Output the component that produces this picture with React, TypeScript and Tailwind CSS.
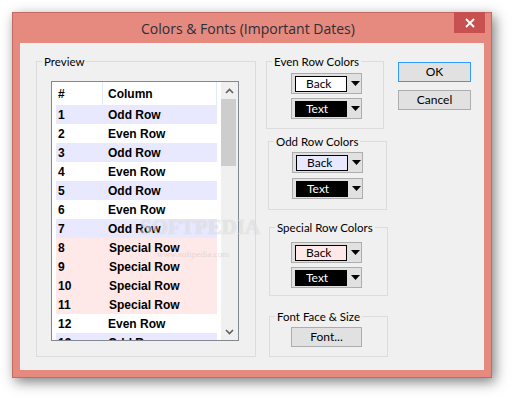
import React from 'react'

const rows: { n: number; label: string; kind: 'odd' | 'even' | 'special' }[] = [
    { n: 1, label: 'Odd Row', kind: 'odd' },
    { n: 2, label: 'Even Row', kind: 'even' },
    { n: 3, label: 'Odd Row', kind: 'odd' },
    { n: 4, label: 'Even Row', kind: 'even' },
    { n: 5, label: 'Odd Row', kind: 'odd' },
    { n: 6, label: 'Even Row', kind: 'even' },
    { n: 7, label: 'Odd Row', kind: 'odd' },
    { n: 8, label: 'Special Row', kind: 'special' },
    { n: 9, label: 'Special Row', kind: 'special' },
    { n: 10, label: 'Special Row', kind: 'special' },
    { n: 11, label: 'Special Row', kind: 'special' },
    { n: 12, label: 'Even Row', kind: 'even' },
    { n: 13, label: 'Odd Row', kind: 'odd' },
]

const rowBg = {
    odd: 'bg-[#e8e8ff]',
    even: 'bg-white',
    special: 'bg-[#ffe8e8]',
}

function GroupBox({ label, className, children }: { label: string; className: string; children?: React.ReactNode }) {
    return (
        <div className={`relative border border-[#dcdcdc] ${className}`}>
            <span className="absolute left-[5px] top-[-8px] px-[2px] bg-[#f0f0f0] text-[11.5px] leading-[15px] text-black">
                {label}
            </span>
            {children}
        </div>
    )
}

function ColorCombo({ swatch, text, dark, className }: { swatch: string; text: string; dark?: boolean; className?: string }) {
    return (
        <div className={`w-[71px] h-[21px] border border-[#adadad] bg-[#e1e1e1] flex items-center ${className ?? ''}`}>
            <div
                className={`ml-[3px] w-[52px] h-[16px] border border-black ${swatch} ${dark ? 'text-white' : 'text-black'} text-[12px] leading-[14px] pl-[10px]`}
            >
                {text}
            </div>
            <svg className="ml-[4px]" width="9" height="5" viewBox="0 0 9 5">
                <path d="M0 0h9L4.5 5z" fill="#000" />
            </svg>
        </div>
    )
}

function Chevron({ up }: { up?: boolean }) {
    return (
        <svg width="9" height="6" viewBox="0 0 9 6">
            <path
                d={up ? 'M1 5L4.5 1.5L8 5' : 'M1 1L4.5 4.5L8 1'}
                fill="none"
                stroke="#606060"
                strokeWidth="1.6"
            />
        </svg>
    )
}

export default function App() {
    return (
        <div className="w-[512px] h-[398px] bg-white overflow-hidden pt-[12px] pl-[12px] font-['Lato','Open_Sans',sans-serif]">
            <div className="relative w-[480px] h-[366px] bg-[#e6897f] border border-[#c26a60] shadow-[3px_4px_12px_rgba(0,0,0,0.5)] flex flex-col">
                {/* Title bar */}
                <div className="h-[30px] flex items-center justify-center text-[#2b3038] text-[14px] font-['Open_Sans',sans-serif] pr-[8px]">
                    Colors &amp; Fonts (Important Dates)
                </div>
                <div className="absolute top-[-1px] right-[6px] w-[31px] h-[21px] bg-[#c75050] flex items-center justify-center">
                    <svg width="10" height="10" viewBox="0 0 10 10">
                        <path d="M1 1L9 9M9 1L1 9" stroke="#fff" strokeWidth="1.8" />
                    </svg>
                </div>

                {/* Client area */}
                <div className="relative ml-[7px] w-[464px] h-[327px] bg-[#f0f0f0] flex items-start">
                    {/* Preview */}
                    <GroupBox label="Preview" className="ml-[16px] mt-[18px] w-[220px] h-[296px]">
                        <div className="ml-[14px] mt-[19px] w-[188px] h-[260px] border border-[#828790] bg-white flex font-['Liberation_Sans',Arial,sans-serif] font-bold text-[12px] text-black">
                            <div className="w-[169px] flex flex-col overflow-hidden">
                                <div className="h-[23px] shrink-0 flex items-center relative">
                                    <span className="ml-[6px] w-[50px]">#</span>
                                    <span>Column</span>
                                    <div className="absolute left-[50px] top-0 w-px h-[23px] bg-[#e3ecf6]" />
                                    <div className="absolute left-[164px] top-0 w-px h-[23px] bg-[#e3ecf6]" />
                                </div>
                                {rows.map((r) => (
                                    <div
                                        key={r.n}
                                        className={`ml-[4px] w-[161px] h-[19px] shrink-0 flex items-center ${rowBg[r.kind]}`}
                                    >
                                        <span className="pl-[2px] w-[52px]">{r.n}</span>
                                        <span className={r.kind === 'special' ? 'pl-[1px]' : ''}>{r.label}</span>
                                    </div>
                                ))}
                            </div>
                            <div className="w-[17px] bg-[#f0f0f0] flex flex-col">
                                <div className="h-[17px] flex items-center justify-center">
                                    <Chevron up />
                                </div>
                                <div className="h-[67px] w-[15px] bg-[#cdcdcd]" />
                                <div className="flex-1" />
                                <div className="h-[17px] flex items-center justify-center">
                                    <Chevron />
                                </div>
                            </div>
                        </div>
                    </GroupBox>

                    {/* Color groups */}
                    <div className="ml-[10px] flex flex-col items-start">
                        <GroupBox label="Even Row Colors" className="mt-[18px] w-[118px] h-[68px]">
                            <ColorCombo swatch="bg-white" text="Back" className="ml-[24px] mt-[11px]" />
                            <ColorCombo swatch="bg-black" text="Text" dark className="ml-[24px] mt-[4px]" />
                        </GroupBox>
                        <GroupBox label="Odd Row Colors" className="ml-[2px] mt-[12px] w-[119px] h-[69px]">
                            <ColorCombo swatch="bg-[#e8e8ff]" text="Back" className="ml-[23px] mt-[10px]" />
                            <ColorCombo swatch="bg-black" text="Text" dark className="ml-[23px] mt-[5px]" />
                        </GroupBox>
                        <GroupBox label="Special Row Colors" className="ml-[3px] mt-[17px] w-[119px] h-[69px]">
                            <ColorCombo swatch="bg-[#ffe8e8]" text="Back" className="ml-[21px] mt-[14px]" />
                            <ColorCombo swatch="bg-black" text="Text" dark className="ml-[21px] mt-[4px]" />
                        </GroupBox>
                        <GroupBox label="Font Face & Size" className="ml-[3px] mt-[20px] w-[119px] h-[41px]">
                            <div className="ml-[21px] mt-[10px] w-[71px] h-[20px] border border-[#adadad] bg-[#e1e1e1] flex items-center justify-center text-[12px] text-black">
                                Font...
                            </div>
                        </GroupBox>
                    </div>

                    {/* Buttons */}
                    <div className="ml-[10px] mt-[19px] flex flex-col gap-[8px]">
                        <div className="w-[73px] h-[20px] border border-[#3399ff] bg-[#e1e1e1] flex items-center justify-center text-[12px] text-black">
                            OK
                        </div>
                        <div className="w-[73px] h-[20px] border border-[#adadad] bg-[#e1e1e1] flex items-center justify-center text-[12px] text-black">
                            Cancel
                        </div>
                    </div>

                    {/* Watermark */}
                    <div className="absolute left-[120px] top-[173px] pointer-events-none text-[21px] leading-[22px] font-['Liberation_Serif',serif] font-bold text-white/50 [text-shadow:0_0_1px_rgba(120,120,120,0.35)]">
                        SOFTPEDIA
                    </div>
                    <div className="absolute left-[137px] top-[206px] pointer-events-none text-[9px] leading-[10px] font-['Liberation_Serif',serif] text-[#c8c8c8]/60">
                        www.softpedia.com
                    </div>
                </div>
            </div>
        </div>
    )
}
